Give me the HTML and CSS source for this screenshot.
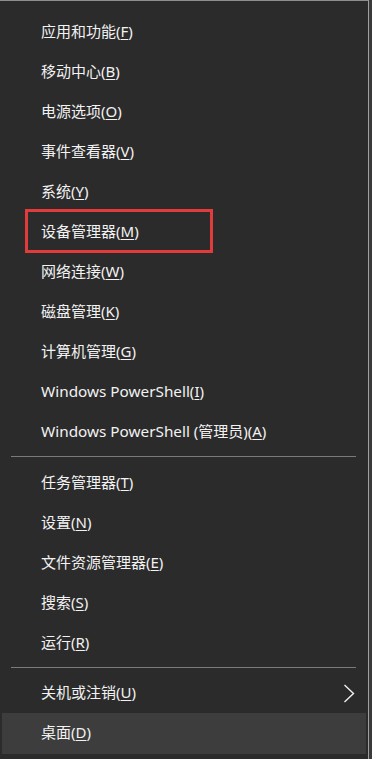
FILE: index.html
```html
<!DOCTYPE html>
<html lang="zh-CN">
<head>
<meta charset="utf-8">
<link rel="stylesheet" href="styles.css">
</head>
<body>
<div class="menu">
  <div class="group">
    <div class="item"><span class="label">应用和功能(<u>F</u>)</span></div>
    <div class="item"><span class="label">移动中心(<u>B</u>)</span></div>
    <div class="item"><span class="label">电源选项(<u>O</u>)</span></div>
    <div class="item"><span class="label">事件查看器(<u>V</u>)</span></div>
    <div class="item"><span class="label">系统(<u>Y</u>)</span></div>
    <div class="item marked"><span class="label">设备管理器(<u>M</u>)</span><span class="highlight"></span></div>
    <div class="item"><span class="label">网络连接(<u>W</u>)</span></div>
    <div class="item"><span class="label">磁盘管理(<u>K</u>)</span></div>
    <div class="item"><span class="label">计算机管理(<u>G</u>)</span></div>
    <div class="item"><span class="label"><span class="latin">Windows PowerShell</span>(<u>I</u>)</span></div>
    <div class="item"><span class="label"><span class="latin">Windows PowerShell</span> (管理员)(<u>A</u>)</span></div>
  </div>
  <div class="sep sep-1"></div>
  <div class="group">
    <div class="item"><span class="label">任务管理器(<u>T</u>)</span></div>
    <div class="item"><span class="label">设置(<u>N</u>)</span></div>
    <div class="item"><span class="label">文件资源管理器(<u>E</u>)</span></div>
    <div class="item"><span class="label">搜索(<u>S</u>)</span></div>
    <div class="item"><span class="label">运行(<u>R</u>)</span></div>
  </div>
  <div class="sep sep-2"></div>
  <div class="group">
    <div class="item has-sub">
      <span class="label">关机或注销(<u>U</u>)</span>
      <svg class="chevron" width="12" height="19" viewBox="0 0 12 19"><path d="M1.5 1 L10.5 9.5 L1.5 18" fill="none" stroke="#f0f0f0" stroke-width="1.4"/></svg>
    </div>
    <div class="item hover"><span class="label">桌面(<u>D</u>)</span></div>
  </div>
</div>
</body>
</html>
```
FILE: styles.css
```css
html, body {
  margin: 0;
  padding: 0;
  background: #3a3a3a;
}
body {
  width: 372px;
  height: 759px;
  overflow: hidden;
  font-family: "Noto Sans", "Noto Sans CJK SC", sans-serif;
}
.menu {
  width: 369px;
  height: 759px;
  box-sizing: border-box;
  background: #2b2b2b;
  border-top: 1px solid #8e8e8e;
  border-right: 1px solid #a0a0a0;
  padding-top: 11px;
  display: flex;
  flex-direction: column;
}
.group {
  display: flex;
  flex-direction: column;
}
.item {
  position: relative;
  box-sizing: border-box;
  height: 40px;
  margin: 0 2px;
  padding-left: 39px;
  padding-bottom: 3px;
  display: flex;
  align-items: center;
  color: #f2f2f2;
  font-size: 15px;
  white-space: nowrap;
}
.latin {
  font-size: 15.3px;
}
.item u {
  text-decoration-thickness: 1px;
  text-underline-offset: 2px;
}
.item.hover {
  background: #3d3d3d;
  height: 41px;
  padding-bottom: 4px;
}
.has-sub {
  justify-content: space-between;
  padding-right: 11px;
}
.chevron {
  display: block;
  margin-top: 3px;
}
.sep {
  height: 1px;
  background: #7a7a7a;
  margin: 0 12px 0 11px;
}
.sep-1 {
  margin-top: 4px;
  margin-bottom: 6px;
}
.sep-2 {
  margin-top: 4px;
  margin-bottom: 5px;
}
.highlight {
  position: absolute;
  left: 23px;
  top: -3px;
  width: 188px;
  height: 44px;
  box-sizing: border-box;
  border: 3px solid #e23b3b;
}
```
